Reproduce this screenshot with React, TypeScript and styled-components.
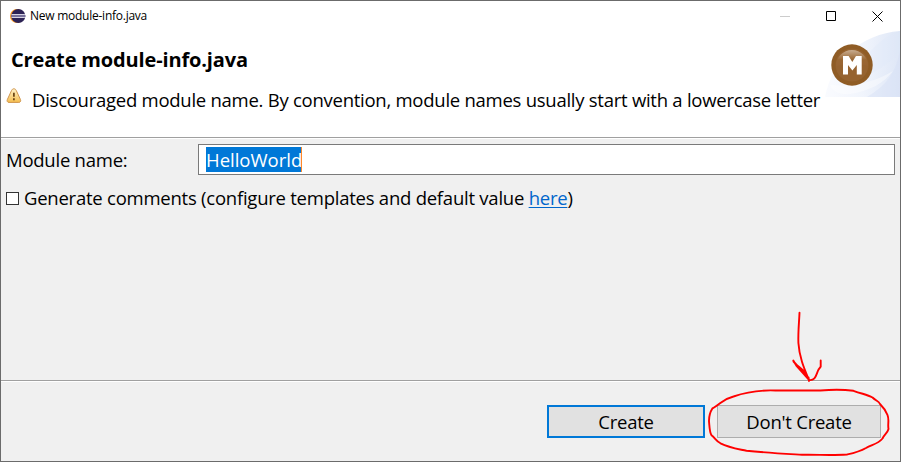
import React from "react";
import styled, { createGlobalStyle } from "styled-components";

const GlobalStyle = createGlobalStyle`
  *, *::before, *::after { box-sizing: border-box; }
  body { margin: 0; background: #f0f0f0; }
`;

const Dialog = styled.main`
  position: relative;
  display: flex;
  flex-direction: column;
  width: 901px;
  height: 462px;
  overflow: hidden;
  border: 1px solid #6b6b6b;
  background: #f0f0f0;
  color: #000;
  font-family: "Open Sans", "Noto Sans", sans-serif;
`;

const Text = styled.span<{ $size?: number; $spacing?: number; $bold?: boolean }>`
  font-size: ${(p) => p.$size ?? 18.5}px;
  letter-spacing: ${(p) => p.$spacing ?? -0.24}px;
  font-weight: ${(p) => (p.$bold ? 700 : 400)};
  line-height: 26px;
  white-space: pre;
`;

const TitleBar = styled.header`
  display: flex;
  align-items: center;
  flex: 0 0 30px;
  padding-left: 9px;
  gap: 4px;
  background: #fff;
`;

const WindowControls = styled.div`
  display: flex;
  margin-left: auto;
`;

const WindowButton = styled.button`
  display: grid;
  place-items: center;
  width: 46px;
  height: 30px;
  padding: 0;
  border: 0;
  background: transparent;
`;

const Banner = styled.section`
  display: flex;
  justify-content: space-between;
  flex: 0 0 108px;
  border-bottom: 1px solid #fff;
  background: #fff;
  box-shadow: inset 0 -1px #a0a0a0;
`;

const BannerText = styled.div`
  display: flex;
  flex-direction: column;
  padding: 16px 0 0 10px;
`;

const Heading = styled.h1`
  display: flex;
  margin: 0;
  height: 26px;
`;

const Message = styled.div`
  display: flex;
  align-items: flex-start;
  gap: 10px;
  height: 26px;
  margin: 14px 0 0 -5px;

  svg {
    margin-top: 1px;
  }
`;

const BannerArt = styled.svg`
  flex: 0 0 76px;
  margin-left: -80px;
`;

const Content = styled.section`
  flex: 0 0 243px;
  padding: 5px 5px 0;
  border-bottom: 1px solid #fff;
  box-shadow: inset 0 -1px #a0a0a0;
`;

const Field = styled.label`
  display: grid;
  grid-template-columns: 192px 697px;
  align-items: center;
  height: 31px;
`;

const Input = styled.div`
  display: flex;
  align-items: center;
  height: 31px;
  padding-left: 7px;
  border: 1px solid #7a7a7a;
  background: #fff;
`;

const Selection = styled.span`
  display: flex;
  align-items: center;
  width: 96px;
  height: 25px;
  background: #0078d7;
  color: #fff;
  border-right: 1px solid #ff8728;
`;

const Option = styled.div`
  display: flex;
  align-items: center;
  gap: 5px;
  height: 26px;
  margin-top: 10px;
`;

const CheckBox = styled.span`
  width: 13px;
  height: 13px;
  border: 1px solid #333;
  background: #fff;
`;

const Link = styled.a`
  color: #0066cc;
  text-decoration: underline;
  text-decoration-thickness: 1px;
  text-underline-offset: 2px;
`;

const Footer = styled.footer`
  display: flex;
  justify-content: flex-end;
  gap: 12px;
  padding: 23px 19px 0 0;
`;

const Button = styled.button<{ $width: number; $primary?: boolean }>`
  display: flex;
  align-items: center;
  justify-content: center;
  width: ${(p) => p.$width}px;
  height: 33px;
  padding: 0;
  border: ${(p) => (p.$primary ? "2px solid #0078d7" : "1px solid #adadad")};
  background: #e1e1e1;
  color: #000;
  font-family: inherit;
`;

const Annotation = styled.svg`
  position: absolute;
  left: 699px;
  top: 299px;
  pointer-events: none;
`;

const EclipseLogo = () => (
  <svg width="16" height="16" viewBox="0 0 16 16">
    <circle cx="7" cy="8" r="7" fill="#f7941e" />
    <circle cx="8.3" cy="8" r="7" fill="#2c2255" />
    <path d="M1.5 6.5h13.4M1.5 9.5h13.4" stroke="#d6d3e4" strokeWidth="1" />
    <path d="M1.200 8h14.200" stroke="#77719b" strokeWidth="2" />
  </svg>
);

const Warning = () => (
  <svg width="16" height="16" viewBox="0 0 16 16">
    <defs>
      <linearGradient id="warn" x2="0" y2="1">
        <stop stopColor="#fff3ca" />
        <stop offset="1" stopColor="#f5bd4d" />
      </linearGradient>
    </defs>
    <path
      d="M7.900.8c1.100 0 1.800.6 2.300 1.600l4.200 9c.7 1.600.1 3-1.600 3H3c-1.700 0-2.300-1.400-1.600-3l4.200-9C6.100 1.400 6.800.8 7.900.8Z"
      fill="url(#warn)"
      stroke="#cf944c"
    />
    <path d="M7.900 4.800v4M7.900 10.300v1.900" stroke="#674010" strokeWidth="1.700" />
  </svg>
);

const ModuleArt = () => (
  <BannerArt width="76" height="67" viewBox="824 31 76 67">
    <defs>
      <linearGradient id="sweep">
        <stop stopColor="#f7f9fe" />
        <stop offset=".5" stopColor="#e9effb" />
        <stop offset="1" stopColor="#cddaf2" />
      </linearGradient>
      <linearGradient id="shine" x2="0" y2="1">
        <stop stopColor="#c8ad91" />
        <stop offset=".6" stopColor="#9a6733" />
        <stop offset="1" stopColor="#986433" />
      </linearGradient>
    </defs>
    <path d="M825 97C832 60 861 34 900 31v66Z" fill="url(#sweep)" opacity=".65" />
    <path d="M867 97c17-10 28-22 33-46v46Z" fill="#d4dff5" opacity=".4" />
    <path d="M868 54C878 42 888 35 900 31v22c-13 12-29 22-51 31 6-8 13-18 19-30Z" fill="#dfe8f9" opacity=".3" />
    <path d="M830 85c23 2 43-2 63-14-9 12-23 20-43 23-10 1-17-2-20-9Z" fill="#fff" opacity=".4" />
    <circle cx="852" cy="65" r="20.700" fill="#8f5c25" />
    <circle cx="852" cy="65" r="16.500" fill="#966330" />
    <path d="M836 66a16 16 0 0 1 32 0c-9-3-22-2-32 0Z" fill="url(#shine)" />
    <path d="M843 74.500V56h5.600l3.700 6 3.700-6h5.700v18.500h-4.900v-9.500l-4.400 5.500-4.400-5.500v9.500Z" fill="#fff" />
  </BannerArt>
);

const RedMarks = () => (
  <Annotation width="201" height="162" viewBox="0 0 201 162" fill="none" stroke="#f00" strokeWidth="1.900" strokeLinecap="round" strokeLinejoin="round">
    <path d="M99.500 12.700C99 24 98 32 98.400 43c1 15 6 26 10.600 37M93.300 60.500l3 5 12.700 14.300M93.500 61.500l5.500 6 9.500 11.500M98 66l7 6 4 8M109 81l-.5-3.500M109 80c7 1 7-6 9.700-10.700l2-2.600 0-6.200" />
    <path d="M12.500 108.500C22 103 23 99 33.500 96.500 49 91 62 90 75.500 90.500h45c12-1 23-1 33 .3 10 3.500 14 4 19 6.700 4 4 6 3 7.500 6.500 4 4 6 7 7.500 11 2 5 0 9 1 14-1 4-4 5-6 9.500-5 6-11 6-16.500 9.500-7 4-12 5-19 6.500-16 1-29 0-45 .3-16-1-34-2-55.500-4-9-2-17-3-26-7.500-5-3-5-5-9-8-2-3-2-9-2.500-14-.1-5 1-9 3.500-13Z" />
  </Annotation>
);

export default function App() {
  return (
    <>
      <GlobalStyle />
      <Dialog>
        <TitleBar>
          <EclipseLogo />
          <Text $size={12} $spacing={-0.25}>New module-info.java</Text>
          <WindowControls>
            <WindowButton aria-label="Minimize">
              <svg width="10" height="10"><path d="M0 5.500h10" stroke="#ccc" /></svg>
            </WindowButton>
            <WindowButton aria-label="Maximize">
              <svg width="10" height="10"><path d="M.5.500h9v9h-9z" fill="none" stroke="#000" /></svg>
            </WindowButton>
            <WindowButton aria-label="Close">
              <svg width="11" height="11"><path d="m.5.500 10 10m0-10-10 10" stroke="#000" /></svg>
            </WindowButton>
          </WindowControls>
        </TitleBar>
        <Banner>
          <BannerText>
            <Heading><Text $bold $size={20} $spacing={-0.15}>Create module-info.java</Text></Heading>
            <Message>
              <Warning />
              <Text $spacing={-0.26}>Discouraged module name. By convention, module names usually start with a lowercase letter</Text>
            </Message>
          </BannerText>
          <ModuleArt />
        </Banner>
        <Content>
          <Field>
            <Text>Module name:</Text>
            <Input><Selection><Text $spacing={0}>HelloWorld</Text></Selection></Input>
          </Field>
          <Option>
            <CheckBox role="checkbox" aria-checked="false" />
            <Text>Generate comments (configure templates and default value <Link>here</Link>)</Text>
          </Option>
        </Content>
        <Footer>
          <Button $width={158} $primary><Text>Create</Text></Button>
          <Button $width={164}><Text>Don't Create</Text></Button>
        </Footer>
        <RedMarks />
      </Dialog>
    </>
  );
}
